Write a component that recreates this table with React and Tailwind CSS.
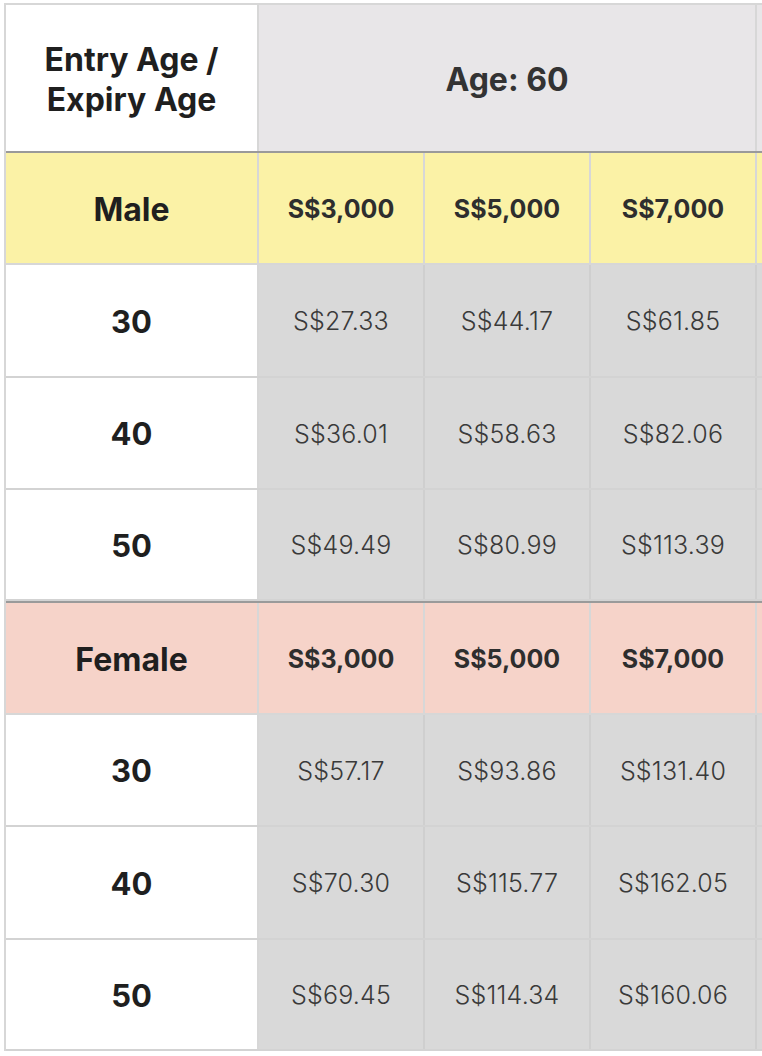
import React from "react";

const male = [
  ["30", "S$27.33", "S$44.17", "S$61.85"],
  ["40", "S$36.01", "S$58.63", "S$82.06"],
  ["50", "S$49.49", "S$80.99", "S$113.39"],
];

const female = [
  ["30", "S$57.17", "S$93.86", "S$131.40"],
  ["40", "S$70.30", "S$115.77", "S$162.05"],
  ["50", "S$69.45", "S$114.34", "S$160.06"],
];

const amounts = ["S$3,000", "S$5,000", "S$7,000"];

const font = { fontFamily: "Inter, 'Noto Sans', sans-serif" };

// one body row: white label cell + gray price cells (+ clipped next column)
const DataRow = ({ row, h }) => (
  <div className={`flex ${h} border-b-2 border-[#d3d3d3]`}>
    <div className="w-[253px] shrink-0 bg-white border-r-2 border-[#d7d7d7] flex items-center justify-center text-[31px] font-bold text-[#1f1f1f] pt-[3px]">
      {row[0]}
    </div>
    {row.slice(1).map((v, i) => (
      <div
        key={i}
        className="w-[166px] shrink-0 bg-[#d9d9d9] border-r-2 border-[#cfcfcf] flex items-center justify-center text-[25px] font-light text-[#3a3a3a] tracking-[0.2px] pt-[3px]"
      >
        {v}
      </div>
    ))}
    <div className="w-[166px] shrink-0 bg-[#d9d9d9]" />
  </div>
);

const GroupRow = ({ label, bg, h }) => (
  <div className={`flex ${h} border-b-2 border-[#d7d7d7] ${bg}`}>
    <div className="w-[253px] shrink-0 border-r-2 border-[#d7d7d7] flex items-center justify-center text-[32px] font-bold text-[#1f1f1f] pt-[3px]">
      {label}
    </div>
    {amounts.map((a, i) => (
      <div
        key={i}
        className="w-[166px] shrink-0 border-r-2 border-[#d7d7d7] flex items-center justify-center text-[25px] font-bold text-[#2e2e2e] pt-[3px]"
      >
        {a}
      </div>
    ))}
    <div className="w-[166px] shrink-0" />
  </div>
);

export default function App() {
  return (
    <div className="w-[762px] h-[1056px] overflow-hidden bg-white" style={font}>
      <div className="ml-[4px] mt-[3px] w-[1000px] border-l-2 border-t-2 border-[#d7d7d7]">
        {/* header */}
        <div className="flex h-[148px] border-b-2 border-[#9a9a9a]">
          <div className="w-[253px] shrink-0 bg-white border-r-2 border-[#d7d7d7] flex items-center justify-center text-center text-[32px] leading-[40px] font-bold text-[#1f1f1f] pt-1">
            Entry Age /<br />Expiry Age
          </div>
          <div className="w-[498px] shrink-0 bg-[#e8e6e8] border-r-2 border-[#d7d7d7] flex items-center justify-center text-[32px] font-bold text-[#333] pt-1">
            Age: 60
          </div>
          <div className="w-[498px] shrink-0 bg-[#e8e6e8]" />
        </div>

        <GroupRow label="Male" bg="bg-[#fbf2a6]" h="h-[112px]" />
        <DataRow row={male[0]} h="h-[113px]" />
        <DataRow row={male[1]} h="h-[112px]" />
        <div className="border-b-2 border-[#9a9a9a]">
          <DataRow row={male[2]} h="h-[111px]" />
        </div>

        <GroupRow label="Female" bg="bg-[#f6d3c9]" h="h-[112px]" />
        <DataRow row={female[0]} h="h-[112px]" />
        <DataRow row={female[1]} h="h-[113px]" />
        <DataRow row={female[2]} h="h-[111px]" />
      </div>
    </div>
  );
}
